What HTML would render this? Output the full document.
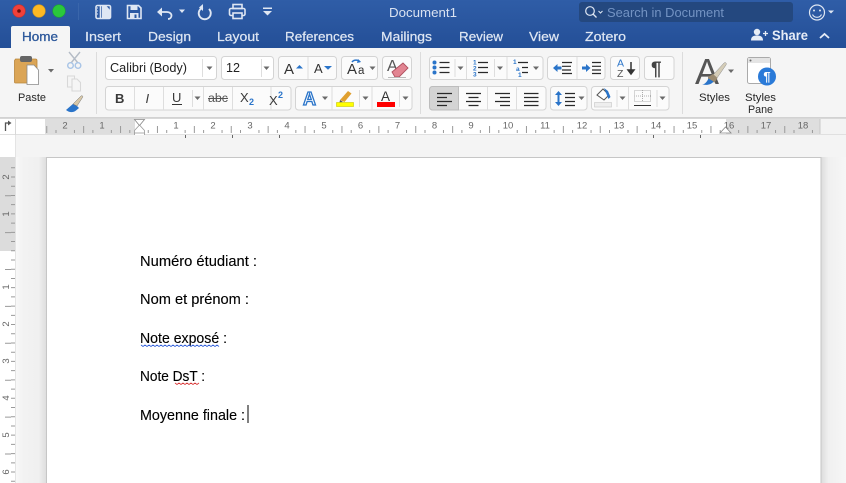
<!DOCTYPE html>
<html><head><meta charset="utf-8"><style>
html,body{margin:0;padding:0;background:#f3f3f3;width:846px;height:483px;overflow:hidden}
svg{display:block;font-family:"Liberation Sans",sans-serif}
.tab{font-size:13px;fill:#dfe7f3;stroke:#dfe7f3;stroke-width:.2}
.btn{fill:#fbfbfb;stroke:#d4d4d4;stroke-width:1}
.d{stroke:#dedede;stroke-width:1}
.car{fill:#6a6a6a}
.ln{stroke:#2a2a2a;stroke-width:1.2;fill:none}
.rn{font-size:9.5px;fill:#666;text-anchor:middle}
.doc{font-size:14.5px;fill:#000;stroke:#000;stroke-width:.12}
.lab{font-size:11px;fill:#262626}
</style></head><body>
<svg width="846" height="483" viewBox="0 0 846 483" xmlns="http://www.w3.org/2000/svg">
<defs>
<linearGradient id="bl" x1="0" y1="0" x2="0" y2="1"><stop offset="0" stop-color="#2f5da7"/><stop offset="1" stop-color="#244f97"/></linearGradient>
<linearGradient id="cv" x1="0" y1="0" x2="1" y2="0"><stop offset="0" stop-color="#f8f8f8"/><stop offset=".25" stop-color="#f2f2f2"/><stop offset=".75" stop-color="#f0f0f0"/><stop offset="1" stop-color="#dedede"/></linearGradient>
<linearGradient id="cv2" x1="0" y1="0" x2="1" y2="0"><stop offset="0" stop-color="#dcdcdc"/><stop offset=".3" stop-color="#f0f0f0"/><stop offset="1" stop-color="#f6f6f6"/></linearGradient>
</defs>
<rect width="846" height="48" fill="url(#bl)"/>
<rect y="48" width="846" height="69" fill="#f5f5f5"/>
<rect y="117" width="846" height="1" fill="#d2d2d2"/>

<!-- traffic lights -->
<circle cx="19" cy="11" r="6.300" fill="#f0413a" stroke="#c9302a" stroke-width=".6"/><circle cx="19" cy="11" r="1.800" fill="#6b0d0a"/>
<circle cx="39" cy="11" r="6.300" fill="#fdb924" stroke="#d89a18" stroke-width=".6"/>
<circle cx="59" cy="11" r="6.300" fill="#2ac83c" stroke="#1fa42f" stroke-width=".6"/>
<rect x="78" y="3" width="1" height="17" fill="#3a66ab"/>

<!-- quick access -->
<g fill="none" stroke="#dfe7f3" stroke-width="1.600">
<rect x="96" y="5.500" width="14.500" height="13" rx="1.500"/><path d="M100.500 6v12"/>
<path d="M127.500 5.500h11l2.500 2.500v10.500h-13.500z"/>
<path d="M158 12h9c3 0 4.500 2 4.500 3.500 0 2-1.500 3.500-3.500 3.500" stroke-width="1.800"/>
<path d="M203 7.500a6 6 0 1 0 6 1.500" stroke-width="1.900"/>
<rect x="233" y="4.500" width="9" height="4"/><rect x="229.500" y="8.500" width="15.500" height="7" rx="1.500"/><rect x="233" y="13" width="9" height="5.500" fill="#2b5aa3"/>
</g>
<path d="M97.500 7.500v1M97.500 10.500v1M97.500 13.500v1" stroke="#dfe7f3" stroke-width="1"/>
<path d="M102 6h4.500l3.500 4v8h-8z" fill="#dfe7f3"/>
<rect x="130.500" y="6" width="7" height="4" fill="#dfe7f3"/><rect x="130" y="13" width="8.500" height="6" fill="#dfe7f3"/><rect x="134.500" y="14.500" width="2" height="3.500" fill="#2b5aa3"/>
<path d="M157 12l5-4.500v9z" fill="#dfe7f3"/>
<path d="M203 4l0 7-4-3.500z" fill="#dfe7f3"/>
<path d="M179 9.500h6l-3 3.500z" fill="#dfe7f3"/>
<rect x="263" y="7.500" width="9" height="1.500" fill="#dfe7f3"/><path d="M263 11h9l-4.500 4.500z" fill="#dfe7f3"/>

<text x="389" y="17" font-size="13" fill="#d9e2f1" textLength="68" lengthAdjust="spacingAndGlyphs">Document1</text>

<!-- search -->
<rect x="579" y="2" width="214" height="20" rx="3" fill="#24487f"/>
<circle cx="590" cy="11" r="4.300" fill="none" stroke="#dfe7f3" stroke-width="1.200"/><path d="M593 14l3.500 3.500" stroke="#dfe7f3" stroke-width="1.300"/>
<path d="M598.500 11l2 2 2-2" fill="none" stroke="#dfe7f3" stroke-width="1"/>
<text x="607" y="17" font-size="13" fill="#7393c3" textLength="117" lengthAdjust="spacingAndGlyphs">Search in Document</text>
<circle cx="817" cy="12.500" r="7.500" fill="none" stroke="#dfe7f3" stroke-width="1.200"/>
<circle cx="814" cy="10.500" r="1" fill="#dfe7f3"/><circle cx="820" cy="10.500" r="1" fill="#dfe7f3"/>
<path d="M812.500 14.500a5 5 0 0 0 9 0" fill="none" stroke="#dfe7f3" stroke-width="1.100"/>
<path d="M828 10.500h6l-3 3z" fill="#dfe7f3"/>

<!-- tabs -->
<path d="M11 48V28a2 2 0 0 1 2-2h55a2 2 0 0 1 2 2v20z" fill="#f5f5f5"/>
<text x="22" y="41" font-size="13" fill="#2b579a" stroke="#2b579a" stroke-width=".3" textLength="36" lengthAdjust="spacingAndGlyphs">Home</text>
<text class="tab" x="85" y="41" textLength="36" lengthAdjust="spacingAndGlyphs">Insert</text>
<text class="tab" x="148" y="41" textLength="43" lengthAdjust="spacingAndGlyphs">Design</text>
<text class="tab" x="217" y="41" textLength="42" lengthAdjust="spacingAndGlyphs">Layout</text>
<text class="tab" x="285" y="41" textLength="69" lengthAdjust="spacingAndGlyphs">References</text>
<text class="tab" x="381" y="41" textLength="51" lengthAdjust="spacingAndGlyphs">Mailings</text>
<text class="tab" x="459" y="41" textLength="44" lengthAdjust="spacingAndGlyphs">Review</text>
<text class="tab" x="529" y="41" textLength="30" lengthAdjust="spacingAndGlyphs">View</text>
<text class="tab" x="585" y="41" textLength="41" lengthAdjust="spacingAndGlyphs">Zotero</text>
<circle cx="757" cy="32" r="3.200" fill="#e6ecf6"/><path d="M751 40.500c0-4 2.500-5 6-5s6 1 6 5z" fill="#e6ecf6"/>
<path d="M763 33.500h5M765.500 31v5" stroke="#e6ecf6" stroke-width="1.300"/>
<text x="772" y="40" font-size="13.500" fill="#e6ecf6" font-weight="bold" textLength="36" lengthAdjust="spacingAndGlyphs">Share</text>
<path d="M820 38l4.500-4 4.500 4" fill="none" stroke="#e6ecf6" stroke-width="1.800"/>

<!-- group separators -->
<rect x="96" y="52" width="1" height="62" fill="#dcdcdc"/>
<rect x="420" y="52" width="1" height="62" fill="#dcdcdc"/>
<rect x="682" y="52" width="1" height="62" fill="#dcdcdc"/>

<!-- paste -->
<path d="M15.500 59h20a1.500 1.500 0 0 1 1.500 1.500V83H15.500a1 1 0 0 1-1-1V60.500z" fill="#dba556" stroke="#b9873d" stroke-width=".8"/>
<rect x="20" y="56" width="12" height="6" rx="2" fill="#666"/>
<path d="M27 65h7l4.500 5v14.500H27z" fill="#fff" stroke="#8a8a8a" stroke-width=".8"/>
<path d="M48 69h6l-3 3.500z" class="car"/>
<text class="lab" x="18" y="101" textLength="28" lengthAdjust="spacingAndGlyphs">Paste</text>
<g fill="none" stroke="#b4bcc6" stroke-width="1.400">
<path d="M69 52l9 11M80 52l-9 11"/><circle cx="70.500" cy="65.500" r="2.800" stroke="#a8c4e6"/><circle cx="78" cy="65.500" r="2.800" stroke="#a8c4e6"/>
<path d="M72 79h5l3.500 3.500V91h-8.500z" stroke="#d8d8d8" stroke-width="1.100"/><path d="M72 87h-4.500V76h7v3" stroke="#d8d8d8" stroke-width="1.100"/>
</g>
<path d="M66 110l8-7 5 5-3 2.500c-3 2.500-7 2-10-.5z" fill="#2a74c9"/><path d="M73 104l8-8c1-1 2.500 .500 1.500 1.500l-5.500 8.500z" fill="#d8c8a8" stroke="#777" stroke-width=".5"/>

<!-- row 1 font -->
<rect class="btn" x="105.500" y="56.500" width="111" height="23" rx="3" style="fill:#fff"/>
<line class="d" x1="202.500" y1="59" x2="202.500" y2="77"/>
<text x="110" y="72" font-size="12.500" fill="#222" textLength="77" lengthAdjust="spacingAndGlyphs">Calibri (Body)</text>
<path d="M206.500 66.500h6l-3 3.500z" class="car"/>
<rect class="btn" x="221.500" y="56.500" width="52" height="23" rx="3" style="fill:#fff"/>
<line class="d" x1="261.500" y1="59" x2="261.500" y2="77"/>
<text x="226" y="72" font-size="12.500" fill="#222" textLength="14" lengthAdjust="spacingAndGlyphs">12</text>
<path d="M263.500 66.500h6l-3 3.500z" class="car"/>

<rect class="btn" x="278.500" y="56.500" width="58" height="23" rx="3"/>
<line class="d" x1="308" y1="57" x2="308" y2="79"/>
<text x="284" y="74" font-size="15" fill="#333">A</text><path d="M296 68.500l3.500-3.500 3.500 3.500z" fill="#2a74c9"/>
<text x="314" y="73" font-size="13" fill="#333">A</text><path d="M324 66h8l-4 3.800z" fill="#2a74c9"/>

<rect class="btn" x="341.500" y="56.500" width="36" height="23" rx="3"/>
<text x="347" y="74" font-size="15" fill="#333">A</text><text x="358" y="74" font-size="11.500" fill="#333">a</text>
<path d="M352 62c2-2.500 6-2.500 8 0" fill="none" stroke="#2a74c9" stroke-width="1.600"/><path d="M358 59l3 3-4 1z" fill="#2a74c9"/>
<path d="M369.500 66.500h6l-3 3.500z" class="car"/>

<rect class="btn" x="382.500" y="56.500" width="29" height="23" rx="3"/>
<text x="387" y="71" font-size="16" fill="#555">A</text>
<path d="M392 72l11-9 5 5-9 9h-4z" fill="#e28592" stroke="#b0505f" stroke-width=".9"/>
<path d="M388 77.500h18" stroke="#bbb"/>

<!-- row 2 font -->
<rect class="btn" x="105.500" y="86.500" width="185.500" height="23.500" rx="3"/>
<g class="d"><line x1="134.500" y1="87" x2="134.500" y2="110"/><line x1="163.500" y1="87" x2="163.500" y2="110"/><line x1="192.500" y1="90" x2="192.500" y2="107"/><line x1="203.500" y1="87" x2="203.500" y2="110"/><line x1="232.500" y1="87" x2="232.500" y2="110"/><line x1="271" y1="87" x2="271" y2="110"/></g>
<text x="115" y="103" font-size="13" font-weight="bold" fill="#3a3a3a">B</text>
<text x="145.500" y="103" font-size="13" font-style="italic" fill="#3a3a3a">I</text>
<text x="172" y="102" font-size="13" fill="#3a3a3a">U</text><rect x="172" y="104" width="10" height="1" fill="#333"/>
<path d="M194.500 96.500h6l-3 3.500z" class="car"/>
<text x="208" y="102" font-size="11.500" fill="#555" textLength="20" lengthAdjust="spacingAndGlyphs">abc</text><rect x="208" y="98" width="20" height="1" fill="#555"/>
<text x="240" y="102" font-size="13" fill="#3a3a3a">X</text><text x="249" y="105" font-size="9" font-weight="bold" fill="#2a74c9">2</text>
<text x="269" y="105" font-size="13" fill="#3a3a3a">X</text><text x="278" y="98" font-size="9" font-weight="bold" fill="#2a74c9">2</text>

<rect class="btn" x="295.500" y="86.500" width="116.500" height="23.500" rx="3"/>
<g class="d"><line x1="332" y1="87" x2="332" y2="110"/><line x1="359.500" y1="90" x2="359.500" y2="107"/><line x1="372" y1="87" x2="372" y2="110"/><line x1="399.500" y1="90" x2="399.500" y2="107"/></g>
<text x="303" y="105" font-size="18" font-weight="bold" fill="#fff" stroke="#2a74c9" stroke-width="1.300">A</text>
<path d="M322 96.500h6l-3 3.500z" class="car"/>
<path d="M340 100l8-9 3.500 2.500-7 8.500z" fill="#e0a030"/><path d="M340 100l3 2-3.500 .5z" fill="#555"/>
<rect x="336.500" y="102.500" width="17" height="4" fill="#ffff00" stroke="#c9c900" stroke-width=".6"/>
<path d="M362.500 96.500h6l-3 3.500z" class="car"/>
<text x="381" y="101" font-size="13.500" fill="#333">A</text>
<rect x="377" y="102" width="18" height="5" fill="#ff0000"/>
<path d="M402.500 96.500h6l-3 3.500z" class="car"/>

<!-- lists -->
<rect class="btn" x="429.500" y="56.500" width="113.500" height="23" rx="3"/>
<g class="d"><line x1="455" y1="59" x2="455" y2="77"/><line x1="466.500" y1="57" x2="466.500" y2="79"/><line x1="494.500" y1="59" x2="494.500" y2="77"/><line x1="507" y1="57" x2="507" y2="79"/></g>
<g fill="#2a74c9"><circle cx="434.500" cy="62.500" r="2"/><circle cx="434.500" cy="67.500" r="2"/><circle cx="434.500" cy="72.500" r="2"/></g>
<path class="ln" d="M439.500 62.500h10M439.500 67.500h10M439.500 72.500h10"/>
<path d="M457.500 66.500h6l-3 3.500z" class="car"/>
<g fill="#2a74c9" font-size="6.500" font-weight="bold"><text x="473" y="64.500">1</text><text x="473" y="70.500">2</text><text x="473" y="76.500">3</text></g>
<path class="ln" d="M478 62.500h10M478 67.500h10M478 72.500h10"/>
<path d="M497 66.500h6l-3 3.500z" class="car"/>
<g fill="#2a74c9" font-size="6.500" font-weight="bold"><text x="513" y="64">1</text><text x="516" y="71">a</text><text x="518" y="77">1</text></g>
<path class="ln" d="M518 62.500h10M522 67.500h6M522 72.500h6"/>
<path d="M533 66.500h6l-3 3.500z" class="car"/>

<rect class="btn" x="547.500" y="56.500" width="57.500" height="23" rx="3"/>
<line class="d" x1="577" y1="57" x2="577" y2="79"/>
<path d="M553 68l4.500-4v2.500h4v3h-4v2.500z" fill="#2a74c9"/><path class="ln" d="M562 62.500h10M562 66.300h9M562 70h9M562 73.500h10" stroke-width="1"/>
<path d="M590.500 68l-4.500-4v2.500h-4v3h4v2.500z" fill="#2a74c9"/><path class="ln" d="M592 62.500h9M592 66.300h9M592 70h9M592 73.500h9" stroke-width="1"/>

<rect class="btn" x="610.500" y="56.500" width="29" height="23" rx="3"/>
<text x="617" y="66.500" font-size="10.500" fill="#2a74c9">A</text><text x="617" y="77" font-size="10.500" fill="#555">Z</text>
<path d="M631 62v10M628 70h6l-3 4z" stroke="#333" stroke-width="1.500" fill="#333"/>
<rect class="btn" x="644.500" y="56.500" width="29.500" height="23" rx="3"/>
<text x="651" y="75" font-size="19" font-weight="bold" fill="#444">¶</text>

<!-- align -->
<rect class="btn" x="429.500" y="86.500" width="116.500" height="23.500" rx="3"/>
<path d="M429.500 89.500a3 3 0 0 1 3-3h26v23.500h-26a3 3 0 0 1-3-3z" fill="#d4d4d4" stroke="#bdbdbd"/>
<g class="d"><line x1="487.500" y1="87" x2="487.500" y2="110"/><line x1="516.500" y1="87" x2="516.500" y2="110"/></g>
<path class="ln" d="M437 93.500h15M437 97.500h10M437 101.500h15M437 105.500h10" stroke-width="1.100"/>
<path class="ln" d="M466 93.500h15M468.500 97.500h10M466 101.500h15M468.500 105.500h10" stroke-width="1.100"/>
<path class="ln" d="M495 93.500h15M500 97.500h10M495 101.500h15M500 105.500h10" stroke-width="1.100"/>
<path class="ln" d="M524 93.500h14.500M524 97.500h14.500M524 101.500h14.500M524 105.500h14.500" stroke-width="1.100"/>
<rect class="btn" x="550.500" y="86.500" width="36.500" height="23.500" rx="3"/>
<path d="M558.500 91l3.500 4h-7zM558.500 106l3.500-4h-7z" fill="#2a74c9"/><rect x="557.500" y="94" width="2" height="9" fill="#2a74c9"/>
<path class="ln" d="M565 93.500h10M565 97.500h10M565 101.500h10M565 105.500h10" stroke-width="1.100"/>
<path d="M578.500 96.500h6l-3 3.500z" class="car"/>

<rect class="btn" x="591.500" y="86.500" width="77.500" height="23.500" rx="3"/>
<g class="d"><line x1="617" y1="90" x2="617" y2="107"/><line x1="628.500" y1="87" x2="628.500" y2="110"/><line x1="657" y1="90" x2="657" y2="107"/></g>
<path d="M597 95l6-6 6 6-5 5z" fill="#fff" stroke="#555" stroke-width="1"/><path d="M604 88l4 3 2.500 6-2 2z" fill="#2a74c9"/>
<rect x="594.500" y="102.500" width="17" height="4.500" fill="#eee" stroke="#ccc" stroke-width=".7"/>
<path d="M619.500 96.500h6l-3 3.500z" class="car"/>
<rect x="634.500" y="90.500" width="16" height="11" fill="none" stroke="#999" stroke-width=".8" stroke-dasharray="1 1"/>
<path d="M642.500 90v12M634 96h17" stroke="#999" stroke-width=".8" stroke-dasharray="1 1"/>
<rect x="634" y="105" width="17" height="1" fill="#333"/>
<path d="M659.500 96.500h6l-3 3.500z" class="car"/>

<!-- styles -->
<text x="695" y="84" font-size="36" fill="#555" textLength="24" lengthAdjust="spacingAndGlyphs">A</text>
<path d="M713 75l11-12c1.500-1 3 0 2 2l-9 13z" fill="#d5cdb8" stroke="#8a8a8a" stroke-width=".5"/>
<path d="M708 77l5-3 4.500 4-3 4.500-6.500-1.500z" fill="#9a8a70"/>
<path d="M702 84.500c3 0 5-3 6.500-6l5 3c-2 3-6 4-11.500 3z" fill="#2a74c9"/>
<path d="M728 69.500h6l-3 3.500z" class="car"/>
<text class="lab" x="699" y="101" textLength="31" lengthAdjust="spacingAndGlyphs">Styles</text>
<rect x="747.500" y="57.500" width="23" height="26" rx="2" fill="#fff" stroke="#aaa"/>
<rect x="748" y="58" width="22" height="5" fill="#e4e4e4"/><circle cx="750.500" cy="60.500" r="1" fill="#666"/>
<circle cx="767" cy="76.500" r="9" fill="#2a7ad8"/>
<text x="767" y="81" font-size="13" font-weight="bold" fill="#fff" text-anchor="middle">¶</text>
<text class="lab" x="745" y="101" textLength="31" lengthAdjust="spacingAndGlyphs">Styles</text>
<text class="lab" x="748" y="113" textLength="25" lengthAdjust="spacingAndGlyphs">Pane</text>

<!-- ruler row -->
<rect y="118" width="846" height="17" fill="#fff"/>
<rect y="118" width="846" height="1" fill="#d8d8d8"/>
<rect y="134" width="846" height="1" fill="#e0e0e0"/>
<rect x="15" y="118" width="1" height="17" fill="#d8d8d8"/>
<path d="M5.500 131v-8h3" fill="none" stroke="#555" stroke-width="1.300"/><path d="M8 120.500l3.500 2.500-3.500 2.500z" fill="#555"/>
<rect x="45" y="119" width="90" height="15" fill="#dedede"/>
<rect x="726" y="119" width="94" height="15" fill="#dedede"/>
<rect x="820" y="119" width="26" height="15" fill="#f3f3f3"/>
<rect x="819.500" y="119" width="1" height="15" fill="#c8c8c8"/>
<g stroke="#9a9a9a" fill="none">
<line x1="55.500" y1="131.500" x2="820" y2="131.500" stroke-width="3" stroke-dasharray="1 17.45"/>
<line x1="46.250" y1="129.500" x2="820" y2="129.500" stroke-width="7" stroke-dasharray="1 35.9"/>
<line x1="185" y1="136.500" x2="702" y2="136.500" stroke="#666" stroke-width="3" stroke-dasharray="1 45.8"/>
</g>
<g class="rn">
<text x="65" y="128.500">2</text><text x="102" y="128.500">1</text>
<text x="176" y="128.500">1</text><text x="213" y="128.500">2</text><text x="250" y="128.500">3</text><text x="287" y="128.500">4</text><text x="324" y="128.500">5</text><text x="360.500" y="128.500">6</text><text x="397.500" y="128.500">7</text><text x="434.500" y="128.500">8</text><text x="471" y="128.500">9</text><text x="508" y="128.500">10</text><text x="545" y="128.500">11</text><text x="582" y="128.500">12</text><text x="619" y="128.500">13</text><text x="656" y="128.500">14</text><text x="692" y="128.500">15</text><text x="729" y="128.500">16</text><text x="766" y="128.500">17</text><text x="803" y="128.500">18</text>
</g>
<path d="M134.500 119.500h10l-5 6z" fill="#fff" stroke="#888" stroke-width=".8"/>
<path d="M139.500 125l5 5.500v8.500h-10v-8.500z" fill="#fff" stroke="#999" stroke-width=".8" stroke-linejoin="round"/>
<path d="M134.500 133h10" stroke="#999" stroke-width=".8"/>
<path d="M725.500 127l5.500 6h-11z" fill="#fff" stroke="#888" stroke-width=".8"/>

<!-- canvas -->
<rect y="135" width="846" height="348" fill="#f3f3f3"/>
<rect x="16" y="135" width="830" height="22" fill="#f4f4f4"/>
<rect x="16" y="157" width="30" height="326" fill="url(#cv)"/>
<rect x="821" y="157" width="25" height="326" fill="url(#cv2)"/>
<rect x="185" y="135" width="1" height="3" fill="#666"/><rect x="232" y="135" width="1" height="3" fill="#666"/><rect x="279" y="135" width="1" height="3" fill="#666"/><rect x="653" y="135" width="1" height="3" fill="#666"/><rect x="700" y="135" width="1" height="3" fill="#666"/>

<!-- page -->
<rect x="46.500" y="157.500" width="774.500" height="330" fill="#fff" stroke="#c6c6c6"/>

<!-- vertical ruler -->
<rect y="135" width="15.500" height="22" fill="#fff"/>
<rect y="157" width="15.500" height="94" fill="#dcdcdc"/>
<rect y="251" width="15.500" height="232" fill="#fff"/>
<rect x="15" y="135" width="1" height="348" fill="#e4e4e4"/>
<g stroke="#9a9a9a" fill="none">
<line x1="13" y1="167.300" x2="13" y2="483" stroke-width="4" stroke-dasharray="1 8.22"/>
<line x1="8" y1="195.200" x2="8" y2="483" stroke-width="6" stroke-dasharray="1 35.9"/>
</g>
<g class="rn">
<text transform="translate(9,177) rotate(-90)">2</text>
<text transform="translate(9,214) rotate(-90)">1</text>
<text transform="translate(9,287) rotate(-90)">1</text>
<text transform="translate(9,324) rotate(-90)">2</text>
<text transform="translate(9,361) rotate(-90)">3</text>
<text transform="translate(9,398) rotate(-90)">4</text>
<text transform="translate(9,435) rotate(-90)">5</text>
<text transform="translate(9,472) rotate(-90)">6</text>
</g>

<!-- document text -->
<text class="doc" x="140" y="266" textLength="117" lengthAdjust="spacingAndGlyphs">Numéro étudiant :</text>
<text class="doc" x="140" y="304" textLength="109" lengthAdjust="spacingAndGlyphs">Nom et prénom :</text>
<text class="doc" x="140" y="343" textLength="87" lengthAdjust="spacingAndGlyphs">Note exposé :</text>
<text class="doc" x="140" y="381" textLength="65" lengthAdjust="spacingAndGlyphs">Note DsT :</text>
<text class="doc" x="140" y="420" textLength="105" lengthAdjust="spacingAndGlyphs">Moyenne finale :</text>
<path d="M141 345l2 1.500 2-1.500 2 1.500 2-1.500 2 1.500 2-1.500 2 1.500 2-1.500 2 1.500 2-1.500 2 1.500 2-1.500 2 1.500 2-1.500 2 1.500 2-1.500 2 1.500 2-1.500 2 1.500 2-1.500 2 1.500 2-1.500 2 1.500 2-1.500 2 1.500 2-1.500 2 1.500 2-1.500 2 1.500 2-1.500 2 1.500 2-1.500 2 1.500 2-1.500 2 1.500 2-1.500 2 1.500 2-1.500 2 1.500 " fill="none" stroke="#2a5ad8" stroke-width=".8"/>
<path d="M175 383l2 1.500 2-1.500 2 1.500 2-1.500 2 1.500 2-1.500 2 1.500 2-1.500 2 1.500 2-1.500 2 1.500 2-1.500" fill="none" stroke="#d83030" stroke-width=".8"/>
<rect x="247.500" y="405" width="1" height="18" fill="#000"/>
</svg>
</body></html>
